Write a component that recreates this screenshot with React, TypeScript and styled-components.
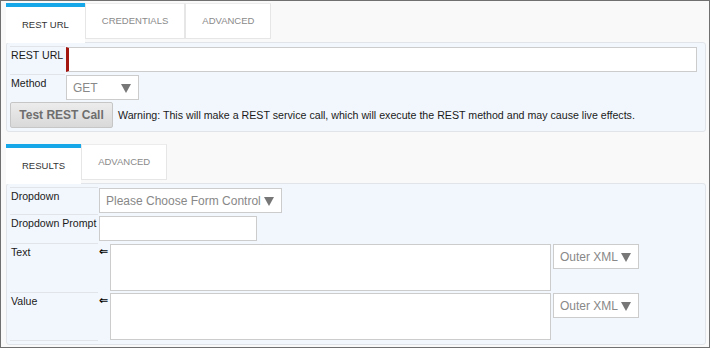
import React from "react";
import styled, { createGlobalStyle } from "styled-components";

const GlobalStyle = createGlobalStyle`
    body {
        margin: 0;
        font-family: "Liberation Sans", Arial, sans-serif;
    }
`;

const App = () => {
    return (
        <Frame>
            <GlobalStyle />
            <TabBar>
                <Tab $active>REST URL</Tab>
                <Tab>CREDENTIALS</Tab>
                <Tab>ADVANCED</Tab>
            </TabBar>
            <Panel>
                <Form $label={55}>
                    <Label>REST URL</Label>
                    <Control $pad="1px 0 2px">
                        <UrlInput />
                    </Control>
                    <Label>Method</Label>
                    <Control>
                        <Select $width={73}>
                            GET <Caret />
                        </Select>
                    </Control>
                    <ActionRow>
                        <Button>Test REST Call</Button>
                        <Warning>
                            Warning: This will make a REST service call, which will execute the REST method and may cause live effects.
                        </Warning>
                    </ActionRow>
                </Form>
            </Panel>

            <TabBar $gap={12}>
                <Tab $active>RESULTS</Tab>
                <Tab>ADVANCED</Tab>
            </TabBar>
            <Panel>
                <Form $label={88}>
                    <Label>Dropdown</Label>
                    <Control>
                        <Select>
                            Please Choose Form Control <Caret />
                        </Select>
                    </Control>
                    <Label>Dropdown Prompt</Label>
                    <Control $pad="2px 0">
                        <TextInput />
                    </Control>
                    <Label>Text</Label>
                    <Control>
                        <Bind>&lArr;</Bind>
                        <Area />
                        <Select>
                            Outer XML <Caret />
                        </Select>
                    </Control>
                    <Label $last>Value</Label>
                    <Control>
                        <Bind>&lArr;</Bind>
                        <Area />
                        <Select>
                            Outer XML <Caret />
                        </Select>
                    </Control>
                </Form>
            </Panel>
        </Frame>
    );
};

const Frame = styled.div`
    width: 710px;
    height: 348px;
    box-sizing: border-box;
    border: 1px solid #707070;
    background: #f9f9f9;
    padding: 2px 3px 0 5px;
    overflow: hidden;
`;

const TabBar = styled.div<{ $gap?: number }>`
    display: flex;
    align-items: flex-start;
    margin-top: ${p => p.$gap || 0}px;
`;

const Tab = styled.div<{ $active?: boolean }>`
    box-sizing: border-box;
    padding: 0 16px;
    font-size: 9.5px;
    line-height: 12px;
    white-space: nowrap;
    background: #fff;
    ${p => p.$active ? `
        height: 40px;
        margin-bottom: -1px;
        padding-top: 12px;
        border-top: 4px solid #16a7e9;
        color: #333;
        position: relative;
        z-index: 1;
    ` : `
        height: 36px;
        padding-top: 11px;
        border: 1px solid #e6e6e6;
        border-top-color: #ececec;
        color: #8a8a8a;
    `}
`;

const Panel = styled.div`
    width: 700px;
    box-sizing: border-box;
    border: 1px solid #e1e5ea;
    border-radius: 3px;
    background: #f2f7fd;
    padding: 3px;
`;

const Form = styled.div<{ $label: number }>`
    display: grid;
    grid-template-columns: ${p => p.$label}px 1fr;
    column-gap: 1px;
`;

const Label = styled.div<{ $last?: boolean }>`
    border-top: 1px solid #e1e5ea;
    ${p => p.$last && "border-bottom: 1px solid #e1e5ea;"}
    padding: 2px 0 0 1px;
    font-size: 10.6px;
    line-height: 13px;
    color: #1a1a1a;
    white-space: nowrap;
`;

const Control = styled.div<{ $pad?: string }>`
    display: flex;
    align-items: flex-start;
    gap: 2px;
    padding: ${p => p.$pad || "1px 0"};
`;

const UrlInput = styled.div`
    box-sizing: border-box;
    width: 631px;
    height: 25px;
    background: #fff;
    border: 1px solid #cccccc;
    border-left: 3px solid #a3150f;
`;

const TextInput = styled.div`
    box-sizing: border-box;
    width: 158px;
    height: 25px;
    background: #fff;
    border: 1px solid #cccccc;
`;

const Area = styled.div`
    box-sizing: border-box;
    width: 441px;
    height: 47px;
    background: #fff;
    border: 1px solid #cccccc;
`;

const Select = styled.div<{ $width?: number }>`
    box-sizing: border-box;
    ${p => p.$width && `width: ${p.$width}px;`}
    height: 25px;
    display: flex;
    align-items: center;
    justify-content: space-between;
    gap: 3px;
    padding: 0 7px 0 6px;
    background: #fff;
    border: 1px solid #cccccc;
    color: #888;
    font-size: 12px;
    white-space: nowrap;
`;

const Caret = styled.span`
    width: 0;
    height: 0;
    border-left: 5.5px solid transparent;
    border-right: 5.5px solid transparent;
    border-top: 9px solid #777;
    margin-top: 1px;
`;

const Bind = styled.span`
    box-sizing: border-box;
    width: 9px;
    font-family: "DejaVu Sans", sans-serif;
    font-size: 11px;
    font-weight: bold;
    line-height: 11px;
    padding-top: 2px;
    color: #000;
`;

const ActionRow = styled.div`
    grid-column: 1 / -1;
    display: flex;
    align-items: center;
    gap: 5px;
    margin-top: 1px;
`;

const Button = styled.div`
    box-sizing: border-box;
    width: 103px;
    height: 26px;
    display: flex;
    align-items: center;
    justify-content: center;
    border: 1px solid #c6c6c6;
    border-radius: 2px;
    background: linear-gradient(#ececec, #d9d9d9);
    color: #6e6e6e;
    font-size: 12px;
    font-weight: bold;
`;

const Warning = styled.span`
    font-size: 10.65px;
    color: #1a1a1a;
    white-space: nowrap;
`;

export default App;
